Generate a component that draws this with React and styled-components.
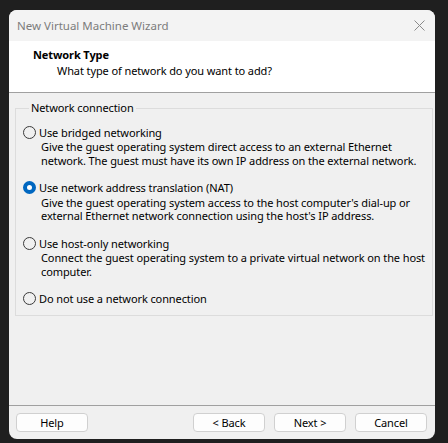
import React from 'react'
import styled, { createGlobalStyle } from 'styled-components'

const options = [
  {
    label: 'Use bridged networking',
    desc: ['Give the guest operating system direct access to an external Ethernet', 'network. The guest must have its own IP address on the external network.'],
  },
  {
    label: 'Use network address translation (NAT)',
    desc: ["Give the guest operating system access to the host computer's dial-up or", "external Ethernet network connection using the host's IP address."],
    checked: true,
  },
  {
    label: 'Use host-only networking',
    desc: ['Connect the guest operating system to a private virtual network on the host', 'computer.'],
  },
  { label: 'Do not use a network connection', desc: [] },
]

export default function App() {
  return (
    <>
      <Global />
      <Window>
        <TitleBar>
          <TitleText>New Virtual Machine Wizard</TitleText>
          <CloseBtn>
            <svg width="11" height="11" viewBox="0 0 11 11">
              <path d="M0.5 0.5 L10.5 10.5 M10.5 0.5 L0.5 10.5" stroke="#8a8a8a" strokeWidth="1" fill="none" />
            </svg>
          </CloseBtn>
        </TitleBar>
        <Header>
          <HeaderTitle>Network Type</HeaderTitle>
          <HeaderSub>What type of network do you want to add?</HeaderSub>
        </Header>
        <Content>
          <Group>
            <Legend>Network connection</Legend>
            {options.map((o) => (
              <Option key={o.label}>
                <RadioRow>
                  <Radio checked={o.checked} />
                  <span>{o.label}</span>
                </RadioRow>
                {o.desc.length > 0 && (
                  <Desc>
                    {o.desc.map((l) => (
                      <div key={l}>{l}</div>
                    ))}
                  </Desc>
                )}
              </Option>
            ))}
          </Group>
        </Content>
        <Footer>
          <Button>Help</Button>
          <Spacer />
          <Button>&lt; Back</Button>
          <Button>Next &gt;</Button>
          <Button>Cancel</Button>
        </Footer>
      </Window>
    </>
  )
}

const Global = createGlobalStyle`
body {
  margin: 0;
  background: #1f1f1f;
  font-family: 'Noto Sans', 'Open Sans', sans-serif;
  font-size: 11px;
  letter-spacing: -0.1px;
  white-space: nowrap;
}
`

const Window = styled.div`
margin: 10px 0 0 9px;
width: 426px;
height: 429px;
display: flex;
flex-direction: column;
background: #f0f0f0;
border-radius: 8px;
overflow: hidden;
`

const TitleBar = styled.div`
height: 31px;
display: flex;
align-items: center;
padding-left: 8px;
background: #f3f3f3;
`

const TitleText = styled.div`
flex: 1;
color: #7c7c7c;
font-size: 11.5px;
letter-spacing: 0;
`

const CloseBtn = styled.div`
width: 11px;
height: 11px;
margin-right: 10px;
display: flex;
`

const Header = styled.div`
height: 52px;
box-sizing: border-box;
padding: 6px 0 0 24px;
background: #ffffff;
border-bottom: 1px solid #a0a0a0;
`

const HeaderTitle = styled.div`
font-weight: bold;
line-height: 16px;
color: #000;
`

const HeaderSub = styled.div`
line-height: 16px;
padding-left: 24px;
color: #000;
`

const Content = styled.div`
flex: 1;
padding: 7px 7px 0 6px;
`

const Group = styled.fieldset`
margin: 0;
padding: 8px 7px 8px 7px;
border: 1px solid #dcdcdc;
display: flex;
flex-direction: column;
gap: 12.5px;
`

const Legend = styled.legend`
padding: 0 2px;
margin-left: 6px;
line-height: 16px;
color: #000;
`

const Option = styled.div`
display: flex;
flex-direction: column;
`

const RadioRow = styled.div`
display: flex;
align-items: center;
height: 16px;
gap: 3px;
color: #000;
`

const Radio = styled.span`
box-sizing: border-box;
width: 13px;
height: 13px;
border-radius: 50%;
border: ${(p) => (p.checked ? '4px solid #0067c0' : '1px solid #3a3a3a')};
background: ${(p) => (p.checked ? '#ffffff' : 'transparent')};
`

const Desc = styled.div`
padding-left: 18px;
line-height: 13.5px;
color: #000;
`

const Footer = styled.div`
display: flex;
gap: 9px;
padding: 7px 8px 7px 7px;
border-top: 1px solid #a0a0a0;
`

const Spacer = styled.div`
flex: 1;
`

const Button = styled.div`
width: 72px;
height: 19px;
box-sizing: border-box;
display: flex;
align-items: center;
justify-content: center;
background: #fdfdfd;
border: 1px solid #d0d0d0;
border-radius: 4px;
color: #000;
`
